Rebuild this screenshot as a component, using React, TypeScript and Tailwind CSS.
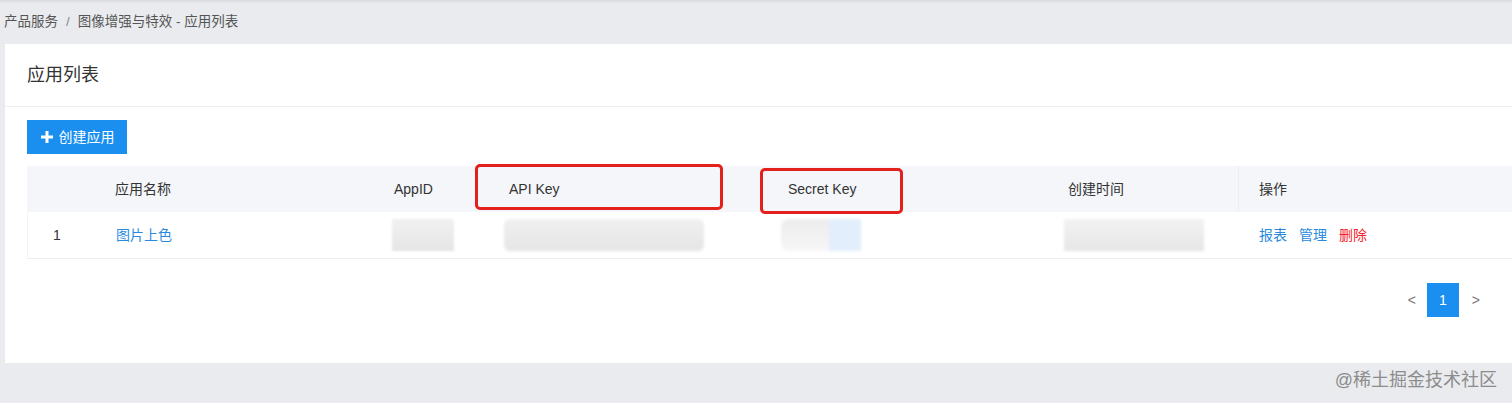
export default function App() {
  const font = { fontFamily: '"Liberation Sans", "Noto Sans CJK SC", sans-serif' };

  return (
    <div className="w-[1512px] h-[403px] bg-[#e9ebee] overflow-hidden text-[#333]" style={font}>
      <div className="h-[4px] bg-gradient-to-b from-[#d9dbde] to-[#e9ebee]"></div>
      <div className="h-[40px] pl-[4px] pt-[8px] text-[13.5px] text-[#555] flex gap-[8px]">
        <span>产品服务</span>
        <span className="text-[#888]">/</span>
        <span>图像增强与特效 - 应用列表</span>
      </div>

      <div className="ml-[5px] h-[319px] bg-white">
        <div className="h-[63px] flex items-center pl-[22px] text-[18px] text-[#333] border-b border-[#eef0f3]">
          应用列表
        </div>

        <div className="pl-[22px] pt-[13px]">
          <button className="w-[100px] h-[34px] flex items-center justify-center gap-[5px] bg-[#1b8ff0] text-white text-[14px]">
            <svg width="14" height="14" viewBox="0 0 14 14">
              <path d="M7 1v12M1 7h12" stroke="white" strokeWidth="3" />
            </svg>
            创建应用
          </button>

          <div className="relative mt-[12px] text-[14px]">
            <div className="flex h-[46px] items-center bg-[#f4f6f9] text-[#333]">
              <div className="w-[68px]"></div>
              <div className="w-[284px] pl-[20px]">应用名称</div>
              <div className="w-[110px] pl-[15px]">AppID</div>
              <div className="w-[279px] pl-[20px]">API Key</div>
              <div className="w-[280px] pl-[20px]">Secret Key</div>
              <div className="w-[190px] pl-[20px]">创建时间</div>
              <div className="flex-1 h-full flex items-center pl-[20px] border-l border-[#eceef1]">操作</div>
            </div>
            <div className="flex h-[47px] items-center border-b border-[#eceef1] border-l border-l-[#f3f4f6]">
              <div className="w-[68px] pl-[25px]">1</div>
              <div className="w-[284px] pl-[20px] text-[#2b8ae0]">图片上色</div>
              <div className="w-[110px] pl-[12px]">
                <div className="w-[62px] h-[32px] bg-gradient-to-b from-[#f1f1f1] to-[#e6e6e6] blur-[1px]"></div>
              </div>
              <div className="w-[279px] pl-[14px]">
                <div className="w-[200px] h-[32px] rounded-[6px] bg-gradient-to-b from-[#f0f0f0] to-[#e5e5e5] blur-[1.5px]"></div>
              </div>
              <div className="w-[280px] pl-[12px]">
                <div className="flex w-[80px] h-[32px] blur-[1.5px]">
                  <div className="w-[48px] h-full rounded-l-[8px] bg-gradient-to-b from-[#ececec] to-[#f6f6f6]"></div>
                  <div className="w-[32px] h-full bg-[#e2eefb]"></div>
                </div>
              </div>
              <div className="w-[190px] pl-[15px]">
                <div className="w-[140px] h-[32px] bg-gradient-to-b from-[#f2f2f2] to-[#e6e6e6] blur-[1.5px]"></div>
              </div>
              <div className="flex-1 pl-[20px] flex gap-[12px]">
                <span className="text-[#2b8ae0]">报表</span>
                <span className="text-[#2b8ae0]">管理</span>
                <span className="text-[#f5222d]">删除</span>
              </div>
            </div>

            <div className="absolute left-[448px] top-[-2px] w-[248px] h-[46px] border-[3px] border-[#e3211c] rounded-[5px]"></div>
            <div className="absolute left-[733px] top-[2px] w-[143px] h-[46px] border-[3px] border-[#e3211c] rounded-[5px]"></div>
          </div>

          <div className="flex justify-end items-center mt-[24px] pr-[32px] text-[14px] text-[#777]">
            <span className="mr-[11px]">&lt;</span>
            <span className="w-[32px] h-[34px] flex items-center justify-center bg-[#1b8ff0] text-white">1</span>
            <span className="ml-[13px]">&gt;</span>
          </div>
        </div>
      </div>

      <div className="text-right pr-[15px] pt-[4px] text-[18px] text-[#8c8c8c]">@稀土掘金技术社区</div>
    </div>
  );
}
